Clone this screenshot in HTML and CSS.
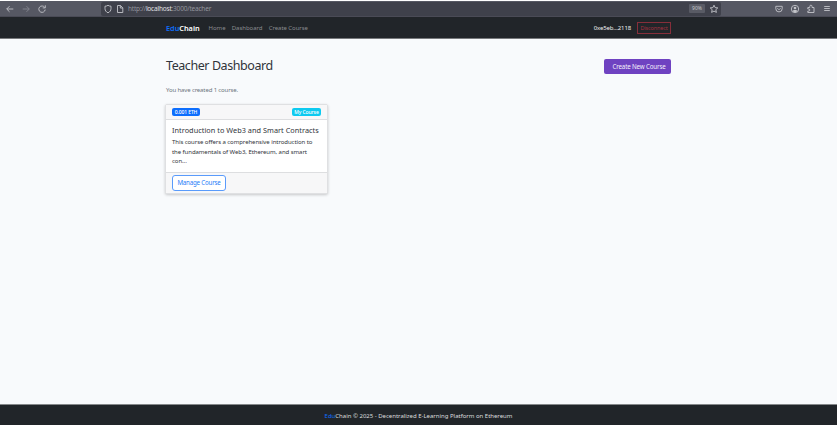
FILE: index.html
```html
<!DOCTYPE html>
<html lang="en">
<head>
<meta charset="utf-8">
<title>EduChain</title>
<link rel="stylesheet" href="styles.css">
</head>
<body>
<div class="window">
  <header class="toolbar">
    <div class="history">
      <svg viewBox="0 0 10 10"><path d="M8.300 5H1.800M4.500 2.200 1.700 5l2.800 2.800"/></svg>
      <svg class="dim" viewBox="0 0 10 10"><path d="M1.700 5h6.500M5.500 2.200 8.300 5 5.500 7.800"/></svg>
      <svg viewBox="0 0 10 10"><path d="M7.700 3.400A3.200 3.200 0 1 0 8.200 5.600M8.300 1.300v2.600H5.700"/></svg>
    </div>
    <div class="address">
      <svg viewBox="0 0 10 10"><path d="M5 1.300c1 .7 2 .9 3 .9v2.300C8 6.600 6.800 8 5 8.800 3.200 8 2 6.600 2 4.500V2.200c1 0 2-.2 3-.9z"/></svg>
      <svg viewBox="0 0 10 10"><path d="M2.500 1.500h3l2.300 2.300v4.700H2.500zM5.300 1.500v2.500h2.500"/></svg>
      <span class="url">http://<b>localhost</b>:3000/teacher</span>
      <span class="zoom">90%</span>
      <svg viewBox="0 0 10 10"><path d="m5 1.200 1.100 2.400 2.700.3-2 1.800.6 2.700L5 7.100 2.600 8.400l.6-2.700-2-1.800 2.700-.3z"/></svg>
    </div>
    <div class="extras">
      <svg viewBox="0 0 10 10"><path d="M1.800 2.300h6.400v2.400a3.200 3.200 0 0 1-6.400 0zM3.400 4.200 5 5.800l1.600-1.600"/></svg>
      <svg viewBox="0 0 10 10"><circle cx="5" cy="5" r="3.700"/><circle class="solid" cx="5" cy="4" r="1.300"/><path class="solid" d="M2.500 7.300c.4-1.800 4.600-1.800 5 0L5 8.600z"/></svg>
      <svg viewBox="0 0 10 10"><path d="M1.800 3.500h2V2.300a1.100 1.100 0 0 1 2.200 0v1.200h2v5H1.800V7h1a1 1 0 0 0 0-2h-1z"/></svg>
      <svg viewBox="0 0 10 10"><path d="M2.200 2.500h5.600M2.200 4.500h5.600M2.200 6.500h5.600"/></svg>
    </div>
  </header>
  <nav class="navbar">
    <div class="container">
      <a class="brand"><span class="edu">Edu</span>Chain</a>
      <a class="link">Home</a>
      <a class="link">Dashboard</a>
      <a class="link">Create Course</a>
      <span class="wallet">0xe5eb...2118</span>
      <button class="disconnect">Disconnect</button>
    </div>
  </nav>
  <main class="page">
    <div class="heading">
      <h1>Teacher Dashboard</h1>
      <button class="create">Create New Course</button>
    </div>
    <p class="summary">You have created 1 course.</p>
    <article class="card">
      <div class="card-head"><span class="badge price">0.001 ETH</span><span class="badge mine">My Course</span></div>
      <div class="card-body">
        <h2>Introduction to Web3 and Smart Contracts</h2>
        <p>This course offers a comprehensive introduction to<br>the fundamentals of Web3, Ethereum, and smart<br>con...</p>
      </div>
      <div class="card-foot"><button class="manage">Manage Course</button></div>
    </article>
  </main>
  <footer class="footer"><span class="edu">Edu</span>Chain © 2025 - Decentralized E-Learning Platform on Ethereum</footer>
</div>
</body>
</html>
```
FILE: styles.css
```css
* { box-sizing: border-box; }
body { margin: 0; background: #fff; font-family: "Noto Sans", sans-serif; color: #30343a; }
button { font-family: inherit; padding: 0; margin: 0; white-space: nowrap; }
.window { width: 837px; height: 425px; padding-top: 1px; display: flex; flex-direction: column; background: #fff; white-space: nowrap; }

.toolbar { height: 16px; flex: none; display: flex; align-items: center; background: #565863; border-bottom: 1px solid #4a4b56; }
.toolbar svg { width: 10px; height: 10px; flex: none; fill: none; stroke: #c3c4c9; stroke-width: .9; }
.toolbar svg .solid { fill: #c3c4c9; stroke: none; }
.toolbar svg.dim { stroke: #858690; }
.history { width: 101px; padding-left: 5px; display: flex; gap: 6px; }
.address { width: 620px; height: 14px; padding: 0 2px; display: flex; align-items: center; gap: 2px; background: #3f414b; border-radius: 2px; }
.url { margin-left: 1px; font-size: 6.500px; letter-spacing: -.2px; color: #94959d; }
.url b { font-weight: 400; color: #e0e0e4; }
.zoom { width: 16px; height: 9px; margin-left: auto; margin-right: 2px; border-radius: 1px; background: #595b65; color: #c5c6cb; font-size: 5px; line-height: 9px; text-align: center; }
.extras { margin-left: auto; padding-right: 5px; display: flex; gap: 6px; }

.navbar { height: 21px; flex: none; background: #212529; box-shadow: 0 1px 0 #77797c; position: relative; }
.container { width: 505px; height: 22px; margin-left: 166px; display: flex; align-items: center; }
.brand { font-size: 7.300px; font-weight: 600; color: #fff; margin-right: 9px; }
.edu { color: #0d6efd; }
.link { font-size: 6px; color: #898c90; margin-right: 6.300px; letter-spacing: -.05px; }
.wallet { margin-left: auto; margin-right: 6px; font-size: 6px; letter-spacing: -.13px; color: #f0f0f0; }
.disconnect { width: 34px; height: 12px; border: 1px solid #862e3a; background: none; color: #a33140; font-size: 5.500px; letter-spacing: -.15px; line-height: 10px; }

.page { flex: 1; padding: 21px 166px 0; background: #f8fafc; }
.heading { display: flex; justify-content: space-between; align-items: flex-start; height: 26px; }
h1 { margin: -2px 0 0; font-size: 12.500px; letter-spacing: -.43px; line-height: 18px; font-weight: 400; }
.create { width: 67px; height: 15px; padding-left: 3px; border: 0; border-radius: 2px; background: #6f42c1; color: #f4effb; font-size: 6.200px; letter-spacing: -.15px; line-height: 15px; }
.summary { margin: 0; font-size: 6px; letter-spacing: -.13px; line-height: 10px; color: #6c757d; }
.card { width: 163px; height: 90px; margin: 9px 0 0 -1px; display: flex; flex-direction: column; background: #fff; border: 1px solid #dfe0e2; border-radius: 2px; box-shadow: 0 1px 3px #0003; }
.card-head { height: 15px; padding: 0 6px; display: flex; justify-content: space-between; align-items: center; background: #f7f7f8; border-bottom: 1px solid #dddee0; }
.badge { height: 8px; border-radius: 2px; color: #fff; font-size: 5px; line-height: 8px; text-align: center; font-weight: 500; letter-spacing: -.1px; }
.price { width: 28px; background: #0d6efd; }
.mine { width: 29px; background: #0dcaf0; }
.card-body { flex: 1; padding: 4px 6px 0; }
h2 { margin: 0; font-size: 7.300px; letter-spacing: .04px; line-height: 12px; font-weight: 400; }
.card-body p { margin: 2px 0 0; font-size: 6px; letter-spacing: -.06px; line-height: 9.500px; }
.card-foot { height: 21px; padding: 2px 6px; background: #f7f7f8; border-top: 1px solid #dddee0; }
.manage { display: block; width: 54px; height: 16px; border: 1px solid #5a9bfb; border-radius: 3px; background: #fff; color: #287df8; font-size: 6.200px; letter-spacing: -.2px; line-height: 14px; }

.footer { height: 20px; flex: none; background: #212529; box-shadow: 0 -1px 0 #85888a; color: #dcddde; font-size: 6px; letter-spacing: -.01px; line-height: 23px; text-align: center; position: relative; }
```
